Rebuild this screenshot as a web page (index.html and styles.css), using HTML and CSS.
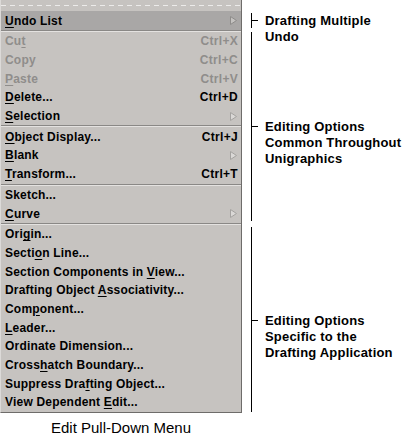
FILE: index.html
```html
<!DOCTYPE html>
<html lang="en">
<head>
    <meta charset="UTF-8">
    <title>Edit Pull-Down Menu</title>
    <link rel="stylesheet" href="styles.css">
</head>
<body>
    <div class="page">
        <div class="figure">
            <div class="menu">
                <div class="tearoff"></div>
                <div class="item active"><span><u>U</u>ndo List</span><svg class="arrow" width="7" height="9"><polygon points="0.5,0.5 6.5,4.5 0.5,8.5"/></svg></div>
                <div class="sep"></div>
                <div class="item disabled"><span>Cu<u>t</u></span><span class="key">Ctrl+X</span></div>
                <div class="item disabled"><span>Copy</span><span class="key">Ctrl+C</span></div>
                <div class="item disabled"><span><u>P</u>aste</span><span class="key">Ctrl+V</span></div>
                <div class="item"><span><u>D</u>elete...</span><span class="key">Ctrl+D</span></div>
                <div class="item"><span><u>S</u>election</span><svg class="arrow" width="7" height="9"><polygon points="0.5,0.5 6.5,4.5 0.5,8.5"/></svg></div>
                <div class="sep"></div>
                <div class="item"><span><u>O</u>bject Display...</span><span class="key">Ctrl+J</span></div>
                <div class="item"><span><u>B</u>lank</span><svg class="arrow" width="7" height="9"><polygon points="0.5,0.5 6.5,4.5 0.5,8.5"/></svg></div>
                <div class="item"><span><u>T</u>ransform...</span><span class="key">Ctrl+T</span></div>
                <div class="sep"></div>
                <div class="item"><span>Sketch...</span></div>
                <div class="item"><span><u>C</u>urve</span><svg class="arrow" width="7" height="9"><polygon points="0.5,0.5 6.5,4.5 0.5,8.5"/></svg></div>
                <div class="sep"></div>
                <div class="item"><span>Ori<u>g</u>in...</span></div>
                <div class="item"><span>Secti<u>o</u>n Line...</span></div>
                <div class="item"><span>Section Components in <u>V</u>iew...</span></div>
                <div class="item"><span>Drafting Object <u>A</u>ssociativity...</span></div>
                <div class="item"><span>Com<u>p</u>onent...</span></div>
                <div class="item"><span><u>L</u>eader...</span></div>
                <div class="item"><span>Ordinate Dimension...</span></div>
                <div class="item"><span>Cross<u>h</u>atch Boundary...</span></div>
                <div class="item"><span>Suppress Dra<u>f</u>ting Object...</span></div>
                <div class="item"><span>View Dependent <u>E</u>dit...</span></div>
            </div>
            <div class="caption">Edit Pull-Down Menu</div>
        </div>

        <div class="notes">
            <div class="group g1">
                <div class="label"><span class="tick"></span><span class="text">Drafting Multiple<br>Undo</span></div>
            </div>
            <div class="group g2">
                <div class="label"><span class="tick"></span><span class="text">Editing Options<br>Common Throughout<br>Unigraphics</span></div>
            </div>
            <div class="group g3">
                <div class="label"><span class="tick"></span><span class="text">Editing Options<br>Specific to the<br>Drafting Application</span></div>
            </div>
        </div>
    </div>
</body>
</html>
```

FILE: styles.css
```css
body {
    margin: 0;
    background: #ffffff;
    font-family: "Liberation Sans", Arial, sans-serif;
    color: #000000;
}
.page {
    display: flex;
    align-items: flex-start;
}
.figure {
    width: 242px;
}
.menu {
    background-color: #c6c3c0;
    border-left: 1px solid #dcdad8;
    border-right: 1px solid #6e6c6a;
    border-bottom: 1px solid #6e6c6a;
    box-sizing: border-box;
    width: 242px;
}
.tearoff {
    height: 11px;
    background-image: repeating-linear-gradient(90deg, #ecebea 0 5px, transparent 5px 9px);
    background-size: 100% 1px;
    background-repeat: no-repeat;
    background-position: 0 5px;
}
.item {
    height: 18.7px;
    display: flex;
    align-items: center;
    justify-content: space-between;
    padding: 0 3px 0 4px;
    font-size: 12px;
    font-weight: bold;
    letter-spacing: 0.2px;
    white-space: nowrap;
}
.item.active {
    height: 19px;
    background-color: #a9a7a6;
}
.item.disabled {
    color: #8f8d8b;
}
.item u {
    text-decoration-thickness: 1px;
    text-underline-offset: 2px;
}
.key {
    letter-spacing: 0.3px;
}
.arrow {
    margin-right: 1px;
}
.arrow polygon {
    fill: #dad8d6;
    stroke: #a4a2a0;
    stroke-width: 1;
}
.active .arrow polygon {
    fill: #c4c2c0;
    stroke: #8e8c8a;
}
.sep {
    height: 1px;
    background-color: #8a8886;
    border-bottom: 1px solid #e4e2e0;
}
.caption {
    margin-top: 7px;
    text-align: center;
    font-size: 15px;
    line-height: 16px;
}
.notes {
    margin-left: 9px;
    display: flex;
    flex-direction: column;
}
.group {
    border-left: 1px solid #000000;
    box-sizing: border-box;
}
.g1 {
    margin-top: 13px;
    height: 15px;
}
.g2 {
    margin-top: 4px;
    height: 189px;
    padding-top: 87px;
}
.g3 {
    margin-top: 6px;
    height: 185px;
    padding-top: 86px;
}
.label {
    display: flex;
    align-items: flex-start;
}
.tick {
    width: 6px;
    height: 1px;
    background-color: #000000;
    margin-top: 7px;
    margin-right: 7px;
    flex: none;
}
.text {
    font-size: 13px;
    font-weight: bold;
    line-height: 16px;
    letter-spacing: 0.2px;
    white-space: nowrap;
}
```
